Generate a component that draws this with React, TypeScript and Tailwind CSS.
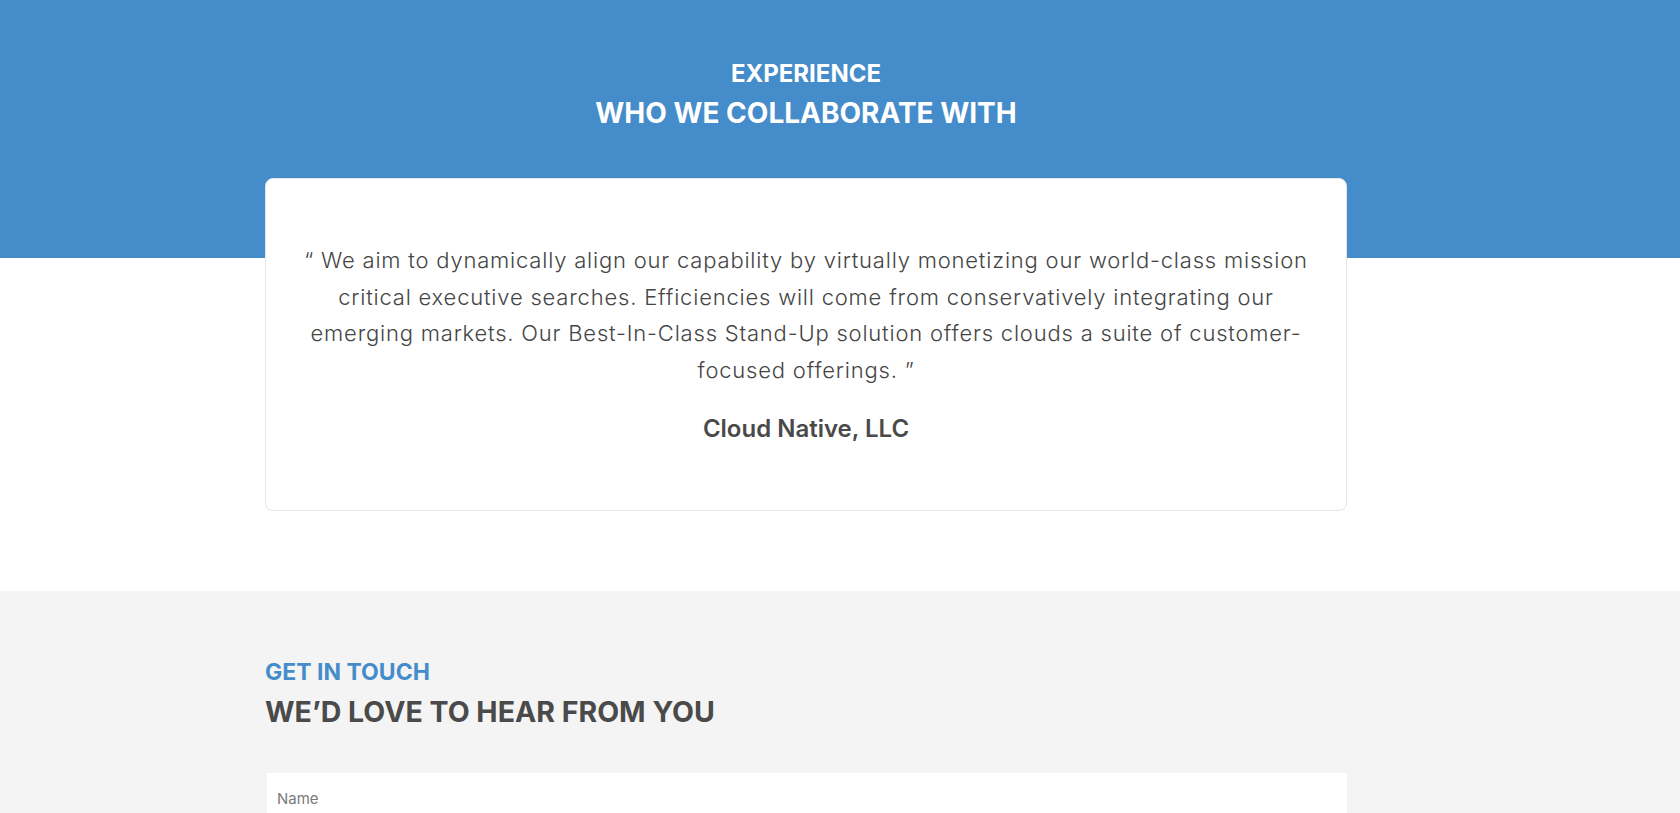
import React from "react";

export default function App() {
  const font = { fontFamily: "Inter, 'Noto Sans', sans-serif" };
  return (
    <div className="min-h-screen bg-white" style={font}>
      <section className="bg-[linear-gradient(to_bottom,#458ccb_258px,#ffffff_258px)] pt-[59px] pb-[80px]">
        <div className="ml-[265px] w-[1082px] flex flex-col items-center">
          <div className="text-white text-[24px] leading-[29px] font-bold">EXPERIENCE</div>
          <h2 className="mt-[7px] text-white text-[28px] leading-[36px] font-bold">WHO WE COLLABORATE WITH</h2>
          <div className="mt-[47px] w-full h-[333px] bg-white border border-[#e6e6e6] rounded-[8px] pt-[63px] px-[10px] flex flex-col items-center">
            <p className="text-[22px] leading-[36.5px] font-light tracking-[0.8px] text-[#454545] text-center whitespace-nowrap">
              “ We aim to dynamically align our capability by virtually monetizing our world-class mission
              <br />
              critical executive searches. Efficiencies will come from conservatively integrating our
              <br />
              emerging markets. Our Best-In-Class Stand-Up solution offers clouds a suite of customer-
              <br />
              focused offerings. ”
            </p>
            <div className="mt-[26px] text-[24px] leading-[30px] font-semibold text-[#4a4a4a]">Cloud Native, LLC</div>
          </div>
        </div>
      </section>
      <section className="bg-[#f4f4f4] pt-[67px] pb-[60px]">
        <div className="ml-[265px] w-[1082px] flex flex-col">
          <div className="text-[#458ccb] text-[23px] leading-[29px] font-bold">GET IN TOUCH</div>
          <h2 className="mt-[7px] text-[#4a4a4a] text-[28.5px] leading-[36px] font-bold">WE’D LOVE TO HEAR FROM YOU</h2>
          <div className="mt-[43px] flex flex-col gap-[20px]">
            <input
              className="ml-[2px] h-[48px] bg-white px-[10px] pt-[2px] text-[15px] text-[#555] placeholder:text-[#7a7a7a] outline-none"
              style={font}
              placeholder="Name"
            />
            <input
              className="ml-[2px] h-[48px] bg-white px-[10px] text-[15px] text-[#555] placeholder:text-[#7a7a7a] outline-none"
              style={font}
              placeholder="Email"
            />
          </div>
        </div>
      </section>
    </div>
  );
}
